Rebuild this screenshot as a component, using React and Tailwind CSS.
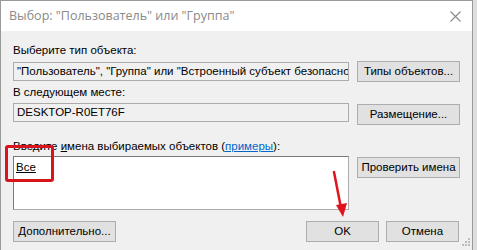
import React from "react";

const Btn = ({ children, className = "" }) => (
  <button
    className={`h-[21px] bg-[#e1e1e1] border border-[#adadad] text-[11.5px] text-black leading-none ${className}`}
  >
    {children}
  </button>
);

export default function App() {
  return (
    <div
      className="relative w-[477px] h-[250px] overflow-hidden bg-[#dedede] flex"
      style={{ fontFamily: "'Liberation Sans', Arial, sans-serif" }}
    >
      <div className="w-[473px] h-full flex flex-col border-l border-t border-r border-[#9a9a9a] bg-[#f0f0f0]">
        {/* title bar */}
        <div className="h-[30px] bg-white flex items-center justify-between pl-[8px] pr-[11px] shrink-0">
          <span
            className="text-[12.5px] text-[#8a8a8a]"
            style={{ fontFamily: "'Open Sans', sans-serif" }}
          >
            Выбор: "Пользователь" или "Группа"
          </span>
          <svg width="11" height="11" viewBox="0 0 11 11" className="mt-[1px]">
            <path d="M0.5 0.5 L10.5 10.5 M10.5 0.5 L0.5 10.5" stroke="#8a8a8a" strokeWidth="1.1" />
          </svg>
        </div>

        {/* body */}
        <div className="flex-1 flex flex-col pl-[12px] pr-[12px] pt-[12px] text-[11.5px] text-black">
          <div className="leading-[14px]">Выберите тип объекта:</div>
          <div className="flex items-start mt-[4px]">
            <div className="w-[336px] h-[19px] mt-[1px] border border-[#acacac] bg-[#f0f0f0] px-[3px] flex items-center whitespace-nowrap overflow-hidden">
              "Пользователь", "Группа" или "Встроенный субъект безопаснос
            </div>
            <Btn className="w-[103px] ml-[8px]">Типы объектов...</Btn>
          </div>

          <div className="leading-[14px] mt-[3px]">В следующем месте:</div>
          <div className="flex items-start mt-[4px]">
            <div className="w-[336px] h-[19px] border border-[#acacac] bg-[#f0f0f0] px-[3px] flex items-center">
              DESKTOP-R0ET76F
            </div>
            <Btn className="w-[103px] ml-[8px] mt-[1px]">Размещение...</Btn>
          </div>

          <div className="leading-[14px] mt-[14px]">
            Введите <span className="underline">и</span>мена выбираемых объектов (
            <span className="text-[#0066cc] underline">примеры</span>):
          </div>
          <div className="flex items-start mt-[3px]">
            <div className="w-[336px] h-[54px] border border-[#acacac] border-l-[#7a7a7a] border-t-[#7a7a7a] bg-white px-[2px] pt-[2px]">
              <span className="underline">Все</span>
            </div>
            <Btn className="w-[103px] ml-[8px] mt-[1px]">Проверить имена</Btn>
          </div>

          <div className="flex items-center mt-[11px]">
            <Btn className="w-[103px]">Дополнительно...</Btn>
            <div className="flex-1" />
            <Btn className="w-[73px]">OK</Btn>
            <Btn className="w-[73px] ml-[7px] mr-[1px]">Отмена</Btn>
          </div>
        </div>
      </div>

      {/* resize grip */}
      <svg width="9" height="9" viewBox="0 0 9 9" className="absolute left-[462px] top-[238px]">
        <g fill="#bdbdbd">
          <rect x="6" y="0" width="2" height="2" />
          <rect x="3" y="3" width="2" height="2" />
          <rect x="6" y="3" width="2" height="2" />
          <rect x="0" y="6" width="2" height="2" />
          <rect x="3" y="6" width="2" height="2" />
          <rect x="6" y="6" width="2" height="2" />
        </g>
      </svg>

      {/* red highlight frame */}
      <div className="absolute left-[5px] top-[145px] w-[49px] h-[37px] border-[3px] border-[#d8141c] rounded-[3px]" />

      {/* red arrow */}
      <svg width="30" height="60" viewBox="0 0 30 60" className="absolute left-[325px] top-[165px]">
        <line x1="9" y1="7" x2="16" y2="43" stroke="#e0141c" strokeWidth="2.5" strokeLinecap="round" />
        <polygon points="11,40 22,38 18,52" fill="#e0141c" />
      </svg>
    </div>
  );
}
